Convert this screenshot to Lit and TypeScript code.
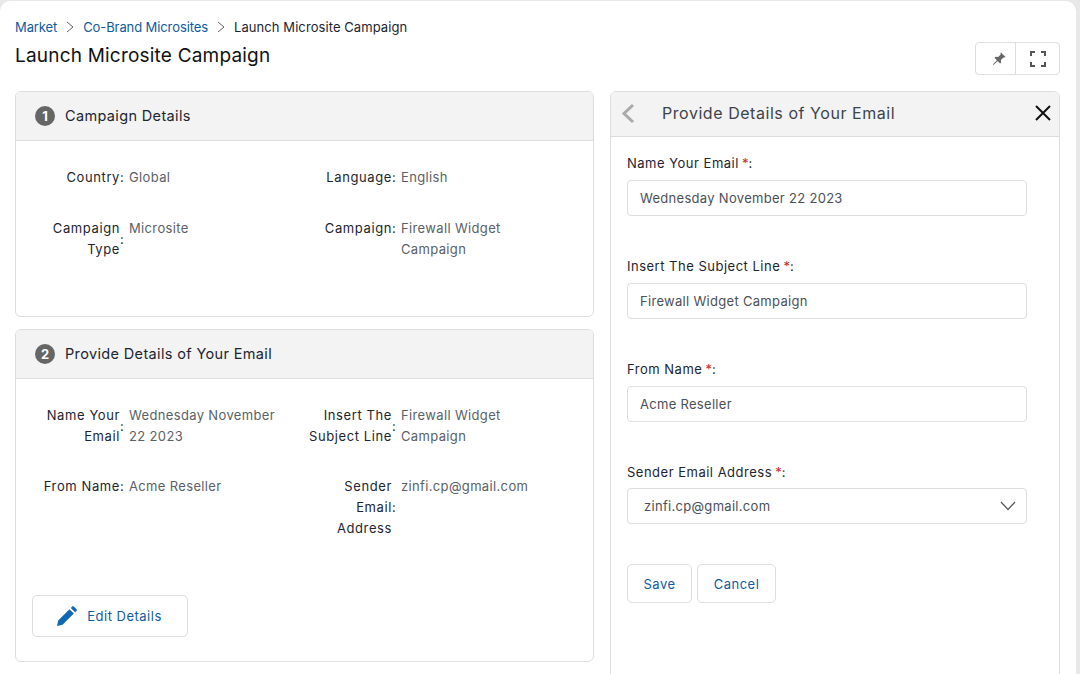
import { LitElement, html, css } from "lit";
import { customElement } from "lit/decorators.js";

const row = (label: string, value: string) => html`
  <div class="row">
    <div class="key"><div class="lbl">${label}</div><div class="colon">:</div></div>
    <div class="val">${value}</div>
  </div>`;

const chevron = html`<svg width="8" height="12" viewBox="0 0 8 12"><path d="M1 1l6 5-6 5" fill="none" stroke="#666" stroke-width="1"/></svg>`;

@customElement("app-root")
export class AppRoot extends LitElement {
  static styles = css`
    :host { display: block; width: 1080px; height: 674px; overflow: hidden; background: #e8e8e8; font-family: Inter, "Open Sans", sans-serif; color: #1c2530; }
    * { box-sizing: border-box; }
    .page { margin: 1px 4px 0 0; height: 673px; background: #fff; border-radius: 10px 10px 0 0; padding: 0 16px 0 15px; overflow: hidden; }
    .crumbs { display: flex; align-items: center; height: 18px; margin-top: 17px; font-size: 13px; letter-spacing: .08px; color: #1c2530; }
    .crumbs a { color: #0f5b9e; letter-spacing: -.1px; }
    .crumbs svg { margin: 0 9px; }
    .head { display: flex; justify-content: space-between; height: 55px; }
    h1 { margin: 8px 0 0; font-size: 19px; font-weight: 400; letter-spacing: .2px; line-height: 24px; color: #111; }
    .tools { display: flex; width: 85px; height: 33px; margin-top: 6px; border: 1px solid #ddd; border-radius: 4px; }
    .tools div { display: flex; align-items: center; justify-content: center; }
    .pin { width: 39px; padding-left: 6px; flex: none; }
    .full { flex: 1; border-left: 1px solid #ddd; }
    .cols { display: flex; gap: 16px; align-items: flex-start; }
    .left { width: 579px; flex: none; display: flex; flex-direction: column; gap: 12px; }
    .card { border: 1px solid #ddd; border-radius: 6px; background: #fff; overflow: hidden; }
    .chead { height: 49px; background: #f3f3f3; border-bottom: 1px solid #ddd; display: flex; align-items: center; padding: 0 0 1px 19px; font-size: 14.5px; letter-spacing: .35px; gap: 10px; color: #1c2530; }
    .num { width: 20px; height: 20px; border-radius: 50%; background: #666; color: #fff; font-size: 13px; font-weight: 700; letter-spacing: 0; display: flex; align-items: center; justify-content: center; }
    .grid { display: grid; grid-template-columns: 272px 272px; font-size: 13px; line-height: 21px; }
    .c1 { height: 175px; padding-top: 26px; grid-auto-rows: 51px 71px; }
    .c2 { height: 282px; padding-top: 26px; }
    .c2 .grid { grid-auto-rows: 71px 71px; }
    .row { display: flex; align-items: flex-start; gap: 5px; }
    .key { display: flex; align-items: center; width: 108px; padding-left: 18px; flex: none; }
    .lbl { width: 86px; flex: none; text-align: right; letter-spacing: .6px; color: #1c2530; }
    .colon { width: 4px; flex: none; color: #1c2530; }
    .val { width: 155px; color: #5a5f68; letter-spacing: .35px; flex: none; }
    .btn { border: 1px solid #ddd; border-radius: 5px; background: #fff; color: #0f5b9e; font-size: 13px; letter-spacing: .5px; display: flex; align-items: center; justify-content: center; }
    .edit { margin: 48px 0 0 16px; width: 156px; height: 42px; gap: 9px; padding-right: 2px; }
    .right { width: 450px; flex: none; height: 640px; border: 1px solid #ddd; border-radius: 6px 6px 0 0; overflow: hidden; }
    .rhead { height: 45px; background: #f3f3f3; border-bottom: 1px solid #ddd; display: flex; align-items: center; padding: 0 7px 2px 9px; font-size: 16px; letter-spacing: .55px; color: #3c434c; }
    .back { margin-right: 26px; flex: none; }
    .x { margin-left: auto; flex: none; }
    .form { padding: 17px 32px 0 16px; }
    .field { height: 103px; }
    .field label { display: block; font-size: 13px; letter-spacing: .5px; line-height: 18px; color: #1c2530; margin-bottom: 8px; }
    .field.last label { margin-bottom: 7px; }
    .field label b { color: #c0282d; font-weight: 400; letter-spacing: 0; margin-left: -1px; }
    .input { height: 36px; border: 1px solid #ddd; border-radius: 4px; display: flex; align-items: center; justify-content: space-between; padding: 0 12px; font-size: 13px; letter-spacing: .3px; color: #4a5058; }
    .select { padding: 0 10px 0 16px; }
    .actions { display: flex; gap: 5px; margin-top: -2px; }
    .actions .btn { height: 39px; }
    .save { width: 65px; }
    .cancel { width: 79px; }
  `;

  render() {
    return html`
      <div class="page">
        <div class="crumbs">
          <a>Market</a>${chevron}<a>Co-Brand Microsites</a>${chevron}<span>Launch Microsite Campaign</span>
        </div>
        <div class="head">
          <h1>Launch Microsite Campaign</h1>
          <div class="tools">
            <div class="pin"><svg width="16" height="16" viewBox="0 0 16 16"><path d="M10 1.500l4.500 4.500-1 .6-1-.2-2.600 2.600.2 2.600-1 1-2.400-2.600L2.500 14l-.6-.5 4-4.300L3.500 6.800l1-1 2.600.2 2.600-2.600-.2-1z" fill="#666"/></svg></div>
            <div class="full"><svg width="16" height="16" viewBox="0 0 16 16"><path d="M1 5V1h4M11 1h4v4M15 11v4h-4M5 15H1v-4" fill="none" stroke="#555" stroke-width="2"/></svg></div>
          </div>
        </div>
        <div class="cols">
          <div class="left">
            <div class="card">
              <div class="chead"><span class="num">1</span>Campaign Details</div>
              <div class="grid c1">
                ${row("Country", "Global")}
                ${row("Language", "English")}
                ${row("Campaign Type", "Microsite")}
                ${row("Campaign", "Firewall Widget Campaign")}
              </div>
            </div>
            <div class="card">
              <div class="chead"><span class="num">2</span>Provide Details of Your Email</div>
              <div class="c2">
                <div class="grid">
                  ${row("Name Your Email", "Wednesday November 22 2023")}
                  ${row("Insert The Subject Line", "Firewall Widget Campaign")}
                  ${row("From Name", "Acme Reseller")}
                  ${row("Sender Email Address", "zinfi.cp@gmail.com")}
                </div>
                <div class="btn edit">
                  <svg width="22" height="22" viewBox="0 0 22 22"><path d="M1 21l1.200-5.500L13.500 4.200l4.300 4.300L6.500 19.800zM14.800 2.900l1.500-1.500a1 1 0 0 1 1.400 0l2.900 2.900a1 1 0 0 1 0 1.400l-1.500 1.500z" fill="#0f68b4"/></svg>
                  Edit Details
                </div>
              </div>
            </div>
          </div>
          <div class="right">
            <div class="rhead">
              <svg class="back" width="16" height="21" viewBox="0 0 16 21"><path d="M13 2L4 10.500l9 8.500" fill="none" stroke="#aaa" stroke-width="3"/></svg>
              Provide Details of Your Email
              <svg class="x" width="18" height="18" viewBox="0 0 18 18"><path d="M2 2l14 14M16 2L2 16" stroke="#111" stroke-width="2"/></svg>
            </div>
            <div class="form">
              <div class="field"><label>Name Your Email <b>*</b>:</label><div class="input">Wednesday November 22 2023</div></div>
              <div class="field"><label>Insert The Subject Line <b>*</b>:</label><div class="input">Firewall Widget Campaign</div></div>
              <div class="field"><label>From Name <b>*</b>:</label><div class="input">Acme Reseller</div></div>
              <div class="field last"><label>Sender Email Address <b>*</b>:</label>
                <div class="input select">zinfi.cp@gmail.com
                  <svg width="16" height="10" viewBox="0 0 16 10"><path d="M1 1l7 7.500L15 1" fill="none" stroke="#555" stroke-width="1.200"/></svg>
                </div></div>
              <div class="actions"><div class="btn save">Save</div><div class="btn cancel">Cancel</div></div>
            </div>
          </div>
        </div>
      </div>`;
  }
}
